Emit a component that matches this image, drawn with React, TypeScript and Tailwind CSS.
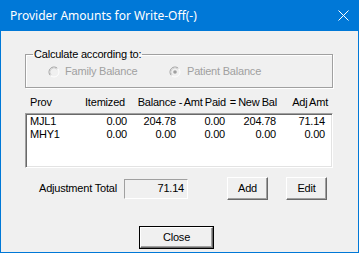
import React from "react";

const rows = [
  { prov: "MJL1", itemized: "0.00", balance: "204.78", paid: "0.00", newBal: "204.78", adj: "71.14" },
  { prov: "MHY1", itemized: "0.00", balance: "0.00", paid: "0.00", newBal: "0.00", adj: "0.00" },
];

function Radio({ checked }: { checked?: boolean }) {
  return (
    <svg width="12" height="12" viewBox="0 0 12 12" className="shrink-0">
      <circle cx="6" cy="6" r="5" fill="#f0f0f0" />
      <path d="M2.46 9.54 A5 5 0 0 1 9.54 2.46" fill="none" stroke="#a0a0a0" strokeWidth="1" />
      <path d="M9.54 2.46 A5 5 0 0 1 2.46 9.54" fill="none" stroke="#ffffff" strokeWidth="1" />
      <path d="M3.17 8.83 A4 4 0 0 1 8.83 3.17" fill="none" stroke="#d4d4d4" strokeWidth="1" />
      {checked && <circle cx="6" cy="6" r="1.8" fill="#a0a0a0" />}
    </svg>
  );
}

function Button({ label, width, isDefault }: { label: string; width: string; isDefault?: boolean }) {
  return (
    <button
      className={
        isDefault
          ? `${width} h-[23px] border border-black bg-[#f0f0f0] p-0`
          : `${width} h-[23px] bg-[#f0f0f0] p-0`
      }
    >
      <div className="h-full w-full border border-t-white border-l-white border-r-[#696969] border-b-[#696969] shadow-[inset_-1px_-1px_0_#a0a0a0] flex items-center justify-center text-black">
        {label}
      </div>
    </button>
  );
}

export default function App() {
  return (
    <div className="w-[359px] h-[253px] bg-[#0078d7] flex flex-col font-['Liberation_Sans',Arial,sans-serif] text-[11px] leading-[13px] text-black tracking-[-0.2px]">
      {/* title bar */}
      <div className="h-[31px] shrink-0 flex items-center justify-between pl-[10px] pr-[10px] text-white">
        <span className="font-['Noto_Sans',sans-serif] text-[12px] tracking-normal leading-[16px]">
          Provider Amounts for Write-Off(-)
        </span>
        <svg width="11" height="11" viewBox="0 0 11 11">
          <path d="M0.5 0.5 L10.5 10.5 M10.5 0.5 L0.5 10.5" stroke="#fff" strokeWidth="1" />
        </svg>
      </div>

      <div className="mx-[1px] mb-[1px] flex-1 bg-[#f0f0f0] flex flex-col pt-[17px]">
        {/* group box */}
        <fieldset className="ml-[24px] w-[308px] h-[40px] border border-[#a0a0a0] shadow-[1px_1px_0_#fff,inset_1px_1px_0_#fff] px-[7px] m-0 pt-[4px] pb-[10px]">
          <legend className="px-[1px]">Calculate according to:</legend>
          <div className="flex items-center">
            <div className="ml-[15px] flex items-center gap-[5px] w-[121px]">
              <Radio />
              <span className="text-[#a0a0a0]">Family Balance</span>
            </div>
            <div className="flex items-center gap-[6px]">
              <Radio checked />
              <span className="text-[#a0a0a0]">Patient Balance</span>
            </div>
          </div>
        </fieldset>

        {/* column headers */}
        <div className="ml-[24px] mt-[8px] grid grid-cols-[62px_38px_51px_50px_51px_51px] whitespace-nowrap [word-spacing:-0.7px]">
          <span className="pl-[5px]">Prov</span>
          <span className="flex justify-end">Itemized</span>
          <span className="flex justify-end">Balance</span>
          <span className="flex justify-end">- Amt Paid</span>
          <span className="flex justify-end">= New Bal</span>
          <span className="flex justify-end">Adj Amt</span>
        </div>

        {/* list */}
        <div className="ml-[24px] mt-[4px] w-[308px] h-[55px] bg-white border border-t-[#a0a0a0] border-l-[#a0a0a0] border-r-white border-b-white shadow-[inset_1px_1px_0_#696969,inset_-1px_-1px_0_#e3e3e3] p-[1px]">
          {rows.map((r) => (
            <div key={r.prov} className="grid grid-cols-[60px_40px_49px_49px_51px_49px] whitespace-nowrap">
              <span className="pl-[3px]">{r.prov}</span>
              <span className="text-right">{r.itemized}</span>
              <span className="text-right">{r.balance}</span>
              <span className="text-right">{r.paid}</span>
              <span className="text-right">{r.newBal}</span>
              <span className="text-right">{r.adj}</span>
            </div>
          ))}
        </div>

        {/* totals + actions */}
        <div className="ml-[38px] mt-[9px] flex items-center h-[23px]">
          <span className="w-[85px]">Adjustment Total</span>
          <div className="w-[64px] h-[20px] border border-t-[#a0a0a0] border-l-[#a0a0a0] border-r-white border-b-white flex items-center justify-end pr-[3px]">
            71.14
          </div>
          <div className="ml-[39px] flex gap-[18px]">
            <Button label="Add" width="w-[41px]" />
            <Button label="Edit" width="w-[41px]" />
          </div>
        </div>

        <div className="mt-[26px] flex pl-[138px]">
          <Button label="Close" width="w-[75px]" isDefault />
        </div>
      </div>
    </div>
  );
}
